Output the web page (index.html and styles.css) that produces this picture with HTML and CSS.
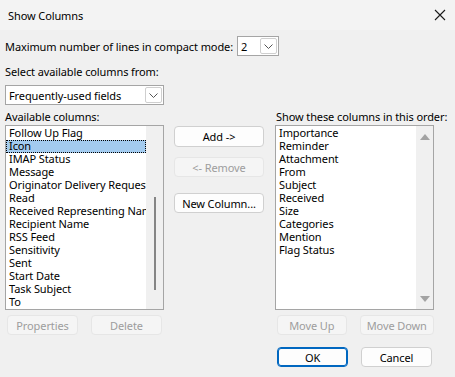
FILE: index.html
```html
<!DOCTYPE html>
<html lang="en">
<head>
    <meta charset="UTF-8">
    <meta name="viewport" content="width=device-width, initial-scale=1.0">
    <title>Show Columns</title>
    <link rel="stylesheet" href="styles.css">
</head>
<body>
    <div class="dialog">
        <div class="titlebar">
            <span class="title">Show Columns</span>
            <svg class="close" width="12" height="12" viewBox="0 0 12 12">
                <path d="M1 1 L11 11 M11 1 L1 11" stroke="#1a1a1a" stroke-width="1.1" fill="none"/>
            </svg>
        </div>
        <div class="content">
            <div class="lines-row">
                <span>Maximum number of lines in compact mode:</span>
                <div class="combo combo-small">
                    <span class="combo-value">2</span>
                    <span class="drop-btn">
                        <svg width="9" height="5" viewBox="0 0 9 5"><path d="M0.5 0.5 L4.5 4.5 L8.5 0.5" stroke="#555" fill="none"/></svg>
                    </span>
                </div>
            </div>
            <div class="label select-label">Select available columns from:</div>
            <div class="combo combo-fields">
                <span class="combo-value">Frequently-used fields</span>
                <span class="drop-btn">
                    <svg width="9" height="5" viewBox="0 0 9 5"><path d="M0.5 0.5 L4.5 4.5 L8.5 0.5" stroke="#555" fill="none"/></svg>
                </span>
            </div>

            <div class="columns">
                <div class="side">
                    <div class="label">Available columns:</div>
                    <div class="listbox">
                        <ul class="items">
                            <li>Follow Up Flag</li>
                            <li class="selected">Icon</li>
                            <li>IMAP Status</li>
                            <li>Message</li>
                            <li>Originator Delivery Requested</li>
                            <li>Read</li>
                            <li>Received Representing Name</li>
                            <li>Recipient Name</li>
                            <li>RSS Feed</li>
                            <li>Sensitivity</li>
                            <li>Sent</li>
                            <li>Start Date</li>
                            <li>Task Subject</li>
                            <li>To</li>
                        </ul>
                        <div class="scrollbar">
                            <div class="thumb"></div>
                        </div>
                    </div>
                    <div class="btn-row">
                        <button class="btn disabled">Properties</button>
                        <button class="btn disabled">Delete</button>
                    </div>
                </div>

                <div class="middle">
                    <button class="btn btn-add">Add -&gt;</button>
                    <button class="btn disabled btn-remove">&lt;- Remove</button>
                    <button class="btn btn-new">New Column...</button>
                </div>

                <div class="side side-right">
                    <div class="label">Show these columns in this order:</div>
                    <div class="listbox">
                        <ul class="items">
                            <li>Importance</li>
                            <li>Reminder</li>
                            <li>Attachment</li>
                            <li>From</li>
                            <li>Subject</li>
                            <li>Received</li>
                            <li>Size</li>
                            <li>Categories</li>
                            <li>Mention</li>
                            <li>Flag Status</li>
                        </ul>
                        <div class="scrollbar arrows">
                            <svg width="10" height="6" viewBox="0 0 10 6"><path d="M0 6 L5 0 L10 6 Z" fill="#a3a3a3"/></svg>
                            <svg width="10" height="6" viewBox="0 0 10 6"><path d="M0 0 L5 6 L10 0 Z" fill="#a3a3a3"/></svg>
                        </div>
                    </div>
                    <div class="btn-row">
                        <button class="btn disabled">Move Up</button>
                        <button class="btn disabled btn-wide">Move Down</button>
                    </div>
                    <div class="btn-row footer">
                        <button class="btn btn-ok">OK</button>
                        <button class="btn">Cancel</button>
                    </div>
                </div>
            </div>
        </div>
    </div>
</body>
</html>
```

FILE: styles.css
```css
* {
    box-sizing: border-box;
}
body {
    margin: 0;
    background-color: #f0f0f0;
    color: #000;
    font-family: "Noto Sans", "Segoe UI", sans-serif;
    font-size: 11px;
    letter-spacing: -0.1px;
}
.dialog {
    width: 455px;
    height: 377px;
    overflow: hidden;
}
.titlebar {
    height: 30px;
    display: flex;
    align-items: center;
    justify-content: space-between;
    padding: 0 9px 0 8px;
    background-color: #f3f3f3;
}
.content {
    padding: 0 5px;
}
.lines-row {
    display: flex;
    align-items: center;
    gap: 4px;
    margin-top: 6px;
    height: 20px;
}
.label {
    height: 16px;
    line-height: 16px;
    white-space: nowrap;
}
.select-label {
    margin-top: 8px;
}
.combo {
    display: flex;
    align-items: center;
    justify-content: space-between;
    height: 20px;
    background-color: #fff;
    border: 1px solid #a5a5a5;
    padding: 0 1px 0 3px;
}
.combo-small {
    width: 42px;
}
.combo-fields {
    width: 159px;
    margin-top: 5px;
}
.drop-btn {
    display: flex;
    align-items: center;
    justify-content: center;
    width: 17px;
    height: 16px;
    border: 1px solid #cfcfcf;
    border-radius: 2px;
    background-color: #fff;
}
.columns {
    display: flex;
    margin-top: 4px;
}
.side {
    width: 159px;
}
.listbox {
    display: flex;
    height: 185px;
    background-color: #fff;
    border: 1px solid #a5a5a5;
    overflow: hidden;
}
.items {
    list-style: none;
    margin: 0;
    padding: 1px 0 0 0;
    flex: 1;
    min-width: 0;
    overflow: hidden;
}
.items li {
    position: relative;
    z-index: 1;
    height: 13px;
    line-height: 11px;
    padding-left: 3px;
    white-space: nowrap;
}
.items li.selected {
    z-index: 0;
    background-color: #a3cbef;
    outline: 1px dotted #000;
    outline-offset: -1px;
}
.scrollbar {
    width: 17px;
    flex-shrink: 0;
    background-color: #f0f0f0;
    display: flex;
    justify-content: center;
}
.thumb {
    width: 2px;
    height: 93px;
    margin-top: 71px;
    background-color: #858585;
}
.scrollbar.arrows {
    flex-direction: column;
    align-items: center;
    justify-content: space-between;
    padding: 8px 0 7px;
}
.btn {
    font-family: inherit;
    font-size: 11px;
    letter-spacing: -0.1px;
    color: #000;
    height: 20px;
    padding: 0;
    background-color: #fdfdfd;
    border: 1px solid #d0d0d0;
    border-radius: 4px;
}
.btn.disabled {
    color: #9d9d9d;
    background-color: #f5f5f5;
    border-color: #e6e6e6;
}
.btn-row {
    display: flex;
    gap: 13px;
    margin-top: 5px;
    padding-left: 2px;
}
.btn-row .btn {
    width: 71px;
}
.btn-row .btn-wide {
    width: 76px;
}
.footer {
    margin-top: 12px;
}
.btn-ok {
    border: 1px solid #0067c0;
    box-shadow: inset 0 0 0 1px #0067c0;
}
.middle {
    display: flex;
    flex-direction: column;
    width: 90px;
    margin: 17px 11px 0 10px;
}
.middle .btn {
    width: 90px;
}
.btn-add {
    height: 21px;
}
.btn-remove {
    margin-top: 10px;
}
.btn-new {
    margin-top: 16px;
}
.side-right .label {
    padding-left: 1px;
}
```
